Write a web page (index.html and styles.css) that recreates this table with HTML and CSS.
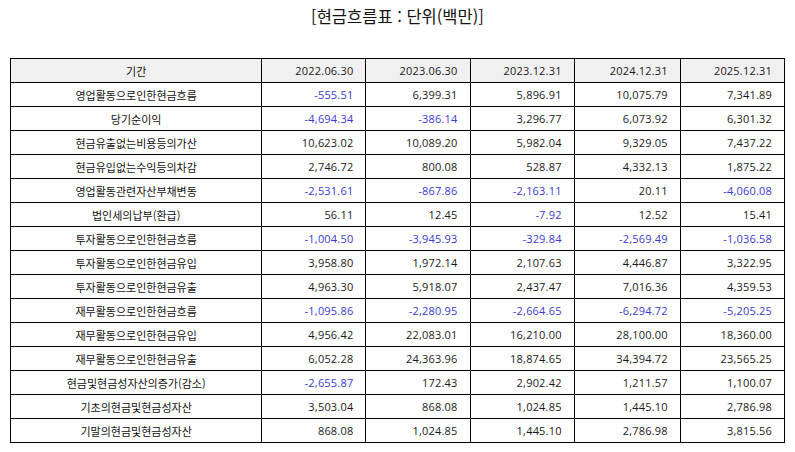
FILE: index.html
```html
<!DOCTYPE html>
<html lang="ko">
<head>
<meta charset="utf-8">
<link rel="stylesheet" href="styles.css">
</head>
<body>
<div class="page">
  <h1 class="title">[현금흐름표 : 단위(백만)]</h1>
  <table class="cf">
    <colgroup>
      <col class="c-label"><col class="c-num"><col class="c-num"><col class="c-num"><col class="c-num2"><col class="c-num">
    </colgroup>
    <thead>
      <tr><th class="label">기간</th><th>2022.06.30</th><th>2023.06.30</th><th>2023.12.31</th><th>2024.12.31</th><th>2025.12.31</th></tr>
    </thead>
    <tbody>
      <tr><td class="label">영업활동으로인한현금흐름</td><td class="neg">-555.51</td><td>6,399.31</td><td>5,896.91</td><td>10,075.79</td><td>7,341.89</td></tr>
      <tr><td class="label">당기순이익</td><td class="neg">-4,694.34</td><td class="neg">-386.14</td><td>3,296.77</td><td>6,073.92</td><td>6,301.32</td></tr>
      <tr><td class="label">현금유출없는비용등의가산</td><td>10,623.02</td><td>10,089.20</td><td>5,982.04</td><td>9,329.05</td><td>7,437.22</td></tr>
      <tr><td class="label">현금유입없는수익등의차감</td><td>2,746.72</td><td>800.08</td><td>528.87</td><td>4,332.13</td><td>1,875.22</td></tr>
      <tr><td class="label">영업활동관련자산부채변동</td><td class="neg">-2,531.61</td><td class="neg">-867.86</td><td class="neg">-2,163.11</td><td>20.11</td><td class="neg">-4,060.08</td></tr>
      <tr><td class="label">법인세의납부(환급)</td><td>56.11</td><td>12.45</td><td class="neg">-7.92</td><td>12.52</td><td>15.41</td></tr>
      <tr><td class="label">투자활동으로인한현금흐름</td><td class="neg">-1,004.50</td><td class="neg">-3,945.93</td><td class="neg">-329.84</td><td class="neg">-2,569.49</td><td class="neg">-1,036.58</td></tr>
      <tr><td class="label">투자활동으로인한현금유입</td><td>3,958.80</td><td>1,972.14</td><td>2,107.63</td><td>4,446.87</td><td>3,322.95</td></tr>
      <tr><td class="label">투자활동으로인한현금유출</td><td>4,963.30</td><td>5,918.07</td><td>2,437.47</td><td>7,016.36</td><td>4,359.53</td></tr>
      <tr><td class="label">재무활동으로인한현금흐름</td><td class="neg">-1,095.86</td><td class="neg">-2,280.95</td><td class="neg">-2,664.65</td><td class="neg">-6,294.72</td><td class="neg">-5,205.25</td></tr>
      <tr><td class="label">재무활동으로인한현금유입</td><td>4,956.42</td><td>22,083.01</td><td>16,210.00</td><td>28,100.00</td><td>18,360.00</td></tr>
      <tr><td class="label">재무활동으로인한현금유출</td><td>6,052.28</td><td>24,363.96</td><td>18,874.65</td><td>34,394.72</td><td>23,565.25</td></tr>
      <tr><td class="label">현금및현금성자산의증가(감소)</td><td class="neg">-2,655.87</td><td>172.43</td><td>2,902.42</td><td>1,211.57</td><td>1,100.07</td></tr>
      <tr><td class="label">기초의현금및현금성자산</td><td>3,503.04</td><td>868.08</td><td>1,024.85</td><td>1,445.10</td><td>2,786.98</td></tr>
      <tr><td class="label">기말의현금및현금성자산</td><td>868.08</td><td>1,024.85</td><td>1,445.10</td><td>2,786.98</td><td>3,815.56</td></tr>
    </tbody>
  </table>
</div>
</body>
</html>
```

FILE: styles.css
```css
html, body {
  margin: 0;
  padding: 0;
  background: #ffffff;
}
.page {
  width: 795px;
  height: 452px;
  padding: 0 10px;
  box-sizing: border-box;
  font-family: "Open Sans", "Noto Sans CJK KR", sans-serif;
  color: #1a1a1a;
}
.title {
  margin: 0;
  height: 58px;
  padding-top: 5px;
  box-sizing: border-box;
  text-align: center;
  font-family: "Noto Sans CJK KR", sans-serif;
  font-weight: normal;
  font-size: 16.5px;
  line-height: 22px;
  color: #111;
}
.cf {
  width: 775px;
  border-collapse: collapse;
  table-layout: fixed;
  font-size: 11px;
}
.c-label { width: 251px; }
.c-num { width: 104px; }
.c-num2 { width: 106px; }
.cf th, .cf td {
  border: 1px solid #000;
  height: 24px;
  padding: 0 12px 0 4px;
  box-sizing: border-box;
  text-align: right;
  font-weight: normal;
  white-space: nowrap;
  letter-spacing: 0.2px;
}
.cf thead th {
  background: #f0f0f0;
}
.cf .label {
  text-align: center;
  padding: 0 4px;
  font-family: "Noto Sans CJK KR", sans-serif;
  font-size: 11px;
  letter-spacing: 0;
  color: #111;
}
.cf .neg {
  color: #3a3ad2;
}
```
